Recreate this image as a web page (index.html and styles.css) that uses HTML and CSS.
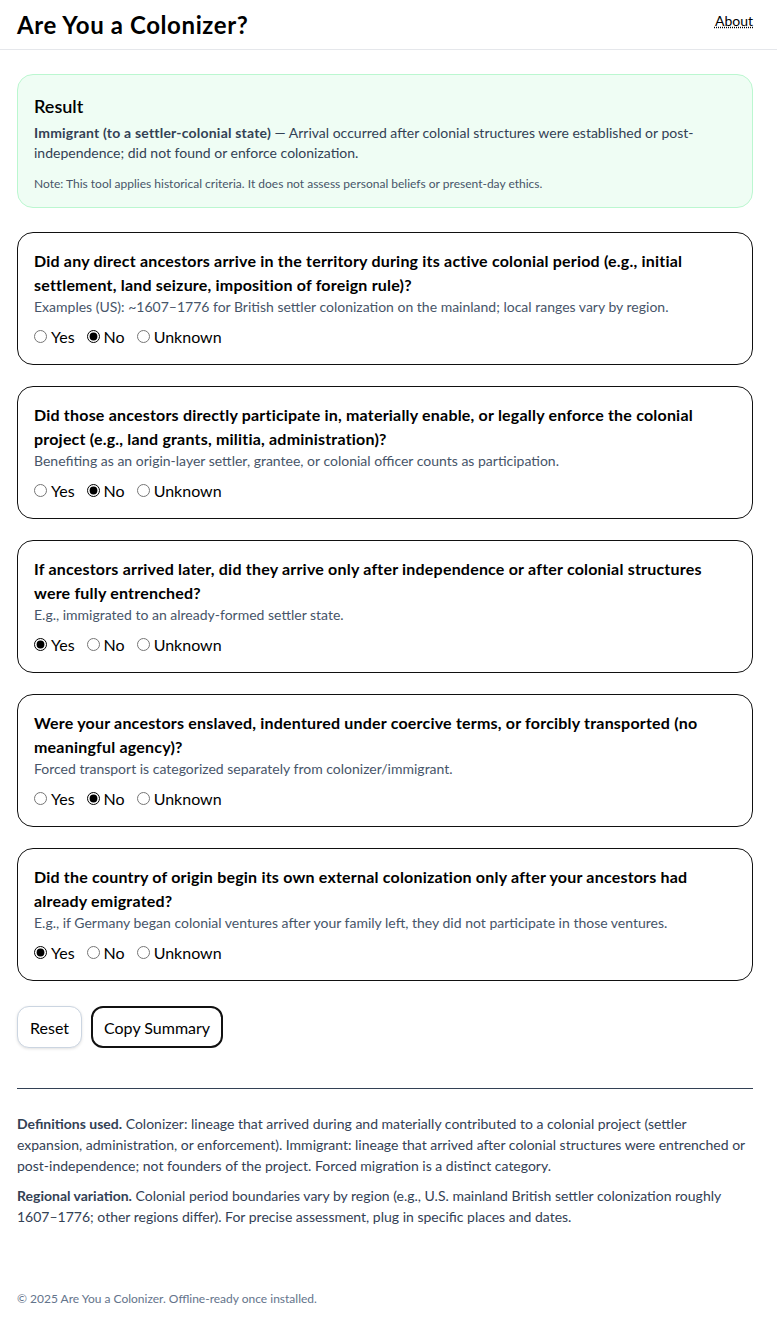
FILE: index.html
```html
<!DOCTYPE html>
<html lang="en">
<head>
<meta charset="utf-8">
<title>Are You a Colonizer?</title>
<link rel="stylesheet" href="styles.css">
</head>
<body>
<header class="topbar">
  <h1 class="brand">Are You a Colonizer?</h1>
  <a class="about" href="#">About</a>
</header>
<main class="main">
  <section class="result">
    <h2 class="result-title">Result</h2>
    <p class="result-text"><strong>Immigrant (to a settler-colonial state)</strong> — Arrival occurred after colonial structures were established or post-independence; did not found or enforce colonization.</p>
    <p class="result-note">Note: This tool applies historical criteria. It does not assess personal beliefs or present-day ethics.</p>
  </section>

  <fieldset class="card">
    <p class="q">Did any direct ancestors arrive in the territory during its active colonial period (e.g., initial settlement, land seizure, imposition of foreign rule)?</p>
    <p class="hint">Examples (US): ~1607–1776 for British settler colonization on the mainland; local ranges vary by region.</p>
    <div class="opts">
      <label class="opt"><input type="radio" name="q1">Yes</label>
      <label class="opt"><input type="radio" name="q1" checked>No</label>
      <label class="opt"><input type="radio" name="q1">Unknown</label>
    </div>
  </fieldset>

  <fieldset class="card">
    <p class="q">Did those ancestors directly participate in, materially enable, or legally enforce the colonial project (e.g., land grants, militia, administration)?</p>
    <p class="hint">Benefiting as an origin-layer settler, grantee, or colonial officer counts as participation.</p>
    <div class="opts">
      <label class="opt"><input type="radio" name="q2">Yes</label>
      <label class="opt"><input type="radio" name="q2" checked>No</label>
      <label class="opt"><input type="radio" name="q2">Unknown</label>
    </div>
  </fieldset>

  <fieldset class="card">
    <p class="q">If ancestors arrived later, did they arrive only after independence or after colonial structures were fully entrenched?</p>
    <p class="hint">E.g., immigrated to an already-formed settler state.</p>
    <div class="opts">
      <label class="opt"><input type="radio" name="q3" checked>Yes</label>
      <label class="opt"><input type="radio" name="q3">No</label>
      <label class="opt"><input type="radio" name="q3">Unknown</label>
    </div>
  </fieldset>

  <fieldset class="card">
    <p class="q">Were your ancestors enslaved, indentured under coercive terms, or forcibly transported (no meaningful agency)?</p>
    <p class="hint">Forced transport is categorized separately from colonizer/immigrant.</p>
    <div class="opts">
      <label class="opt"><input type="radio" name="q4">Yes</label>
      <label class="opt"><input type="radio" name="q4" checked>No</label>
      <label class="opt"><input type="radio" name="q4">Unknown</label>
    </div>
  </fieldset>

  <fieldset class="card">
    <p class="q">Did the country of origin begin its own external colonization only after your ancestors had already emigrated?</p>
    <p class="hint">E.g., if Germany began colonial ventures after your family left, they did not participate in those ventures.</p>
    <div class="opts">
      <label class="opt"><input type="radio" name="q5" checked>Yes</label>
      <label class="opt"><input type="radio" name="q5">No</label>
      <label class="opt"><input type="radio" name="q5">Unknown</label>
    </div>
  </fieldset>

  <div class="actions">
    <button class="btn btn-reset" type="button">Reset</button>
    <button class="btn btn-copy" type="button">Copy Summary</button>
  </div>

  <hr class="rule">

  <section class="defs">
    <p><strong>Definitions used.</strong> Colonizer: lineage that arrived during and materially contributed to a colonial project (settler expansion, administration, or enforcement). Immigrant: lineage that arrived after colonial structures were entrenched or post-independence; not founders of the project. Forced migration is a distinct category.</p>
    <p><strong>Regional variation.</strong> Colonial period boundaries vary by region (e.g., U.S. mainland British settler colonization roughly 1607–1776; other regions differ). For precise assessment, plug in specific places and dates.</p>
  </section>
</main>
<footer class="foot">© 2025 Are You a Colonizer. Offline-ready once installed.</footer>
</body>
</html>
```

FILE: styles.css
```css
* { box-sizing: border-box; }
html, body { margin: 0; padding: 0; }
body {
  font-family: Lato, "Noto Sans", sans-serif;
  color: #0f172a;
  background: #fff;
}
.topbar {
  height: 50px;
  display: flex;
  align-items: center;
  justify-content: space-between;
  padding: 0 24px 0 17px;
  border-bottom: 1px solid #e5e7eb;
}
.brand {
  margin: 0;
  font-size: 24px;
  font-weight: 700;
  color: #000;
  letter-spacing: 0.6px;
}
.about {
  color: #000;
  font-size: 14px;
  text-decoration: underline dotted;
  margin-top: -8px;
}
.main {
  padding: 24px 24px 0 17px;
}
.result {
  background: #effdf4;
  border: 1px solid #bbf7d0;
  border-radius: 16px;
  padding: 20px 16px 16px 16px;
  margin-bottom: 24px;
}
.result-title {
  margin: 0 0 6px;
  font-size: 18px;
  font-weight: 600;
  color: #000;
}
.result-text {
  margin: 0;
  font-size: 14px;
  line-height: 20px;
  color: #334155;
}
.result-text strong { letter-spacing: 0.2px; }
.result-note {
  margin: 13px 0 0;
  font-size: 12px;
  color: #475569;
}
.card {
  margin: 0 0 21px;
  border: 1px solid #111;
  border-radius: 16px;
  padding: 16px 16px 17px;
  min-height: 133px;
}
.q {
  margin: 0;
  font-size: 16px;
  font-weight: 700;
  line-height: 24px;
  color: #000;
  letter-spacing: 0.2px;
}
.hint {
  margin: 0 0 10px;
  font-size: 14px;
  line-height: 20px;
  color: #475569;
}
.opts {
  display: flex;
  gap: 12px;
  font-size: 16px;
  color: #000;
}
.opt {
  display: inline-flex;
  align-items: center;
  gap: 4px;
}
.opt input { margin: 0; accent-color: #000; }
.actions {
  display: flex;
  gap: 9px;
  margin-top: 25px;
}
.btn {
  font-family: inherit;
  font-size: 16px;
  color: #000;
  background: #fff;
  border-radius: 12px;
  height: 42px;
}
.btn-reset {
  padding: 0 12px;
  border: 1px solid #cbd5e1;
  box-shadow: 0 1px 3px rgba(0,0,0,0.12);
}
.btn-copy {
  padding: 0 11px;
  border: 2px solid #111;
}
.rule {
  margin: 40px 0 0;
  border: 0;
  border-top: 1px solid #334155;
}
.defs {
  padding-top: 24px;
  font-size: 14px;
  line-height: 21px;
  color: #334155;
}
.defs p { margin: 0 0 9px; }
.foot {
  padding: 55px 17px 20px;
  font-size: 12px;
  color: #64748b;
}
```
